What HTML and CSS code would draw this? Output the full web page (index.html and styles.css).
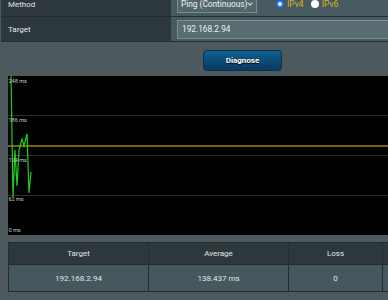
FILE: index.html
```html
<!DOCTYPE html>
<html lang="en">
<head>
    <meta charset="UTF-8">
    <meta name="viewport" content="width=device-width, initial-scale=1.0">
    <title>Network Tools - Ping</title>
    <link rel="stylesheet" href="styles.css">
</head>
<body>
    <div class="page">
        <div class="form-table">
            <div class="form-row">
                <div class="form-label">Method</div>
                <div class="form-value">
                    <div class="select-box">Ping (Continuous) <span class="chevron"></span></div>
                    <label class="radio-item"><span class="radio checked"></span>IPv4</label>
                    <label class="radio-item"><span class="radio"></span>IPv6</label>
                </div>
            </div>
            <div class="form-row">
                <div class="form-label">Target</div>
                <div class="form-value">
                    <div class="text-input">192.168.2.94</div>
                </div>
            </div>
        </div>

        <div class="actions">
            <button class="diagnose-button">Diagnose</button>
        </div>

        <div class="chart">
            <svg width="400" height="159" viewBox="0 0 400 159">
                <rect x="0" y="0" width="400" height="159" fill="#000"/>
                <line x1="0" y1="39.5" x2="400" y2="39.5" stroke="#2e2e2e" stroke-width="1"/>
                <line x1="0" y1="79.5" x2="400" y2="79.5" stroke="#2e2e2e" stroke-width="1"/>
                <line x1="0" y1="119.5" x2="400" y2="119.5" stroke="#2e2e2e" stroke-width="1"/>
                <line x1="0" y1="70" x2="400" y2="70" stroke="#7a6209" stroke-width="2"/>
                <polyline fill="none" stroke="#1ed01e" stroke-width="1.2"
                    points="3,0 4,60 5,121 7,74 9,110 11,74 14,63 16,70 19,58 21,117 23,96"/>
                <text class="axis-label" x="0.5" y="7">248 ms</text>
                <text class="axis-label" x="0.5" y="46">186 ms</text>
                <text class="axis-label" x="0.5" y="86">124 ms</text>
                <text class="axis-label" x="0.5" y="125">62 ms</text>
                <text class="axis-label" x="0.5" y="156">0 ms</text>
            </svg>
        </div>

        <div class="result-wrap">
            <table class="result-table">
                <colgroup>
                    <col class="col-target">
                    <col class="col-average">
                    <col class="col-loss">
                    <col class="col-extra">
                </colgroup>
                <thead>
                    <tr>
                        <th>Target</th>
                        <th>Average</th>
                        <th>Loss</th>
                        <th></th>
                    </tr>
                </thead>
                <tbody>
                    <tr>
                        <td>192.168.2.94</td>
                        <td>138.437 ms</td>
                        <td>0</td>
                        <td></td>
                    </tr>
                </tbody>
            </table>
        </div>
    </div>
</body>
</html>
```

FILE: styles.css
```css
body {
    margin: 0;
    padding: 0;
    background: #4d595d;
    font-family: Roboto, 'Liberation Sans', Arial, sans-serif;
    overflow: hidden;
}
.page {
    width: 460px;
}
.form-table {
    margin: -8px 0 0 1px;
    width: 430px;
}
.form-row {
    display: flex;
    height: 24px;
    border-bottom: 1px solid #232e32;
}
.form-label {
    width: 163px;
    padding-left: 7px;
    background: #2c383c;
    color: #e4e6e6;
    font-size: 8px;
    display: flex;
    align-items: center;
}
.form-value {
    flex: 1;
    background: #475a5f;
    padding-left: 6px;
    display: flex;
    align-items: center;
}
.select-box {
    width: 75px;
    height: 16px;
    padding-left: 3px;
    border: 1px solid #7a8b8f;
    background: #53666b;
    color: #eef0f0;
    font-size: 8.3px;
    display: flex;
    align-items: center;
    position: relative;
}
.chevron {
    position: absolute;
    right: 4px;
    top: 5px;
    width: 3px;
    height: 3px;
    border-right: 1px solid #dfe3e3;
    border-bottom: 1px solid #dfe3e3;
    transform: rotate(45deg);
}
.radio-item {
    display: flex;
    align-items: center;
    color: #d8b41c;
    font-size: 8.5px;
    margin-top: 0;
}
.radio-item:first-of-type {
    margin-left: 19px;
}
.radio-item + .radio-item {
    margin-left: 7px;
}
.radio {
    width: 8px;
    height: 8px;
    border-radius: 50%;
    background: #fff;
    margin-right: 3px;
    box-sizing: border-box;
}
.radio.checked {
    border: 2px solid #1a73e8;
}
.text-input {
    width: 240px;
    height: 17px;
    padding-left: 4px;
    border: 1px solid #7c8e92;
    background: #596c71;
    color: #eef0f0;
    font-size: 8.3px;
    display: flex;
    align-items: center;
}
.actions {
    display: flex;
    padding-left: 203px;
    margin-top: 8px;
}
.diagnose-button {
    width: 79px;
    height: 21px;
    border: 1px solid #07314f;
    border-radius: 4px;
    background: linear-gradient(#0f5f91, #093a5e);
    color: #fff;
    font-family: inherit;
    font-size: 8px;
    font-weight: bold;
    text-shadow: 0 1px 1px #000;
    padding: 0;
}
.chart {
    margin: 5px 0 0 8px;
    height: 159px;
}
.chart svg {
    display: block;
}
.axis-label {
    fill: #c9c9c9;
    font-size: 5.5px;
    font-family: Roboto, 'Liberation Sans', Arial, sans-serif;
}
.result-wrap {
    margin: 7px 0 0 8px;
}
.result-table {
    border-collapse: collapse;
    table-layout: fixed;
    width: 440px;
    font-size: 8px;
    color: #e4e6e6;
}
.result-table th,
.result-table td {
    border: 1px solid #222d31;
    text-align: center;
    padding: 0;
}
.result-table th {
    background: #2c383c;
    font-weight: normal;
    height: 21px;
}
.result-table td {
    background: #46585d;
    height: 26px;
}
.col-target,
.col-average {
    width: 140px;
}
.col-loss {
    width: 94px;
}
.col-extra {
    width: 66px;
}
```
